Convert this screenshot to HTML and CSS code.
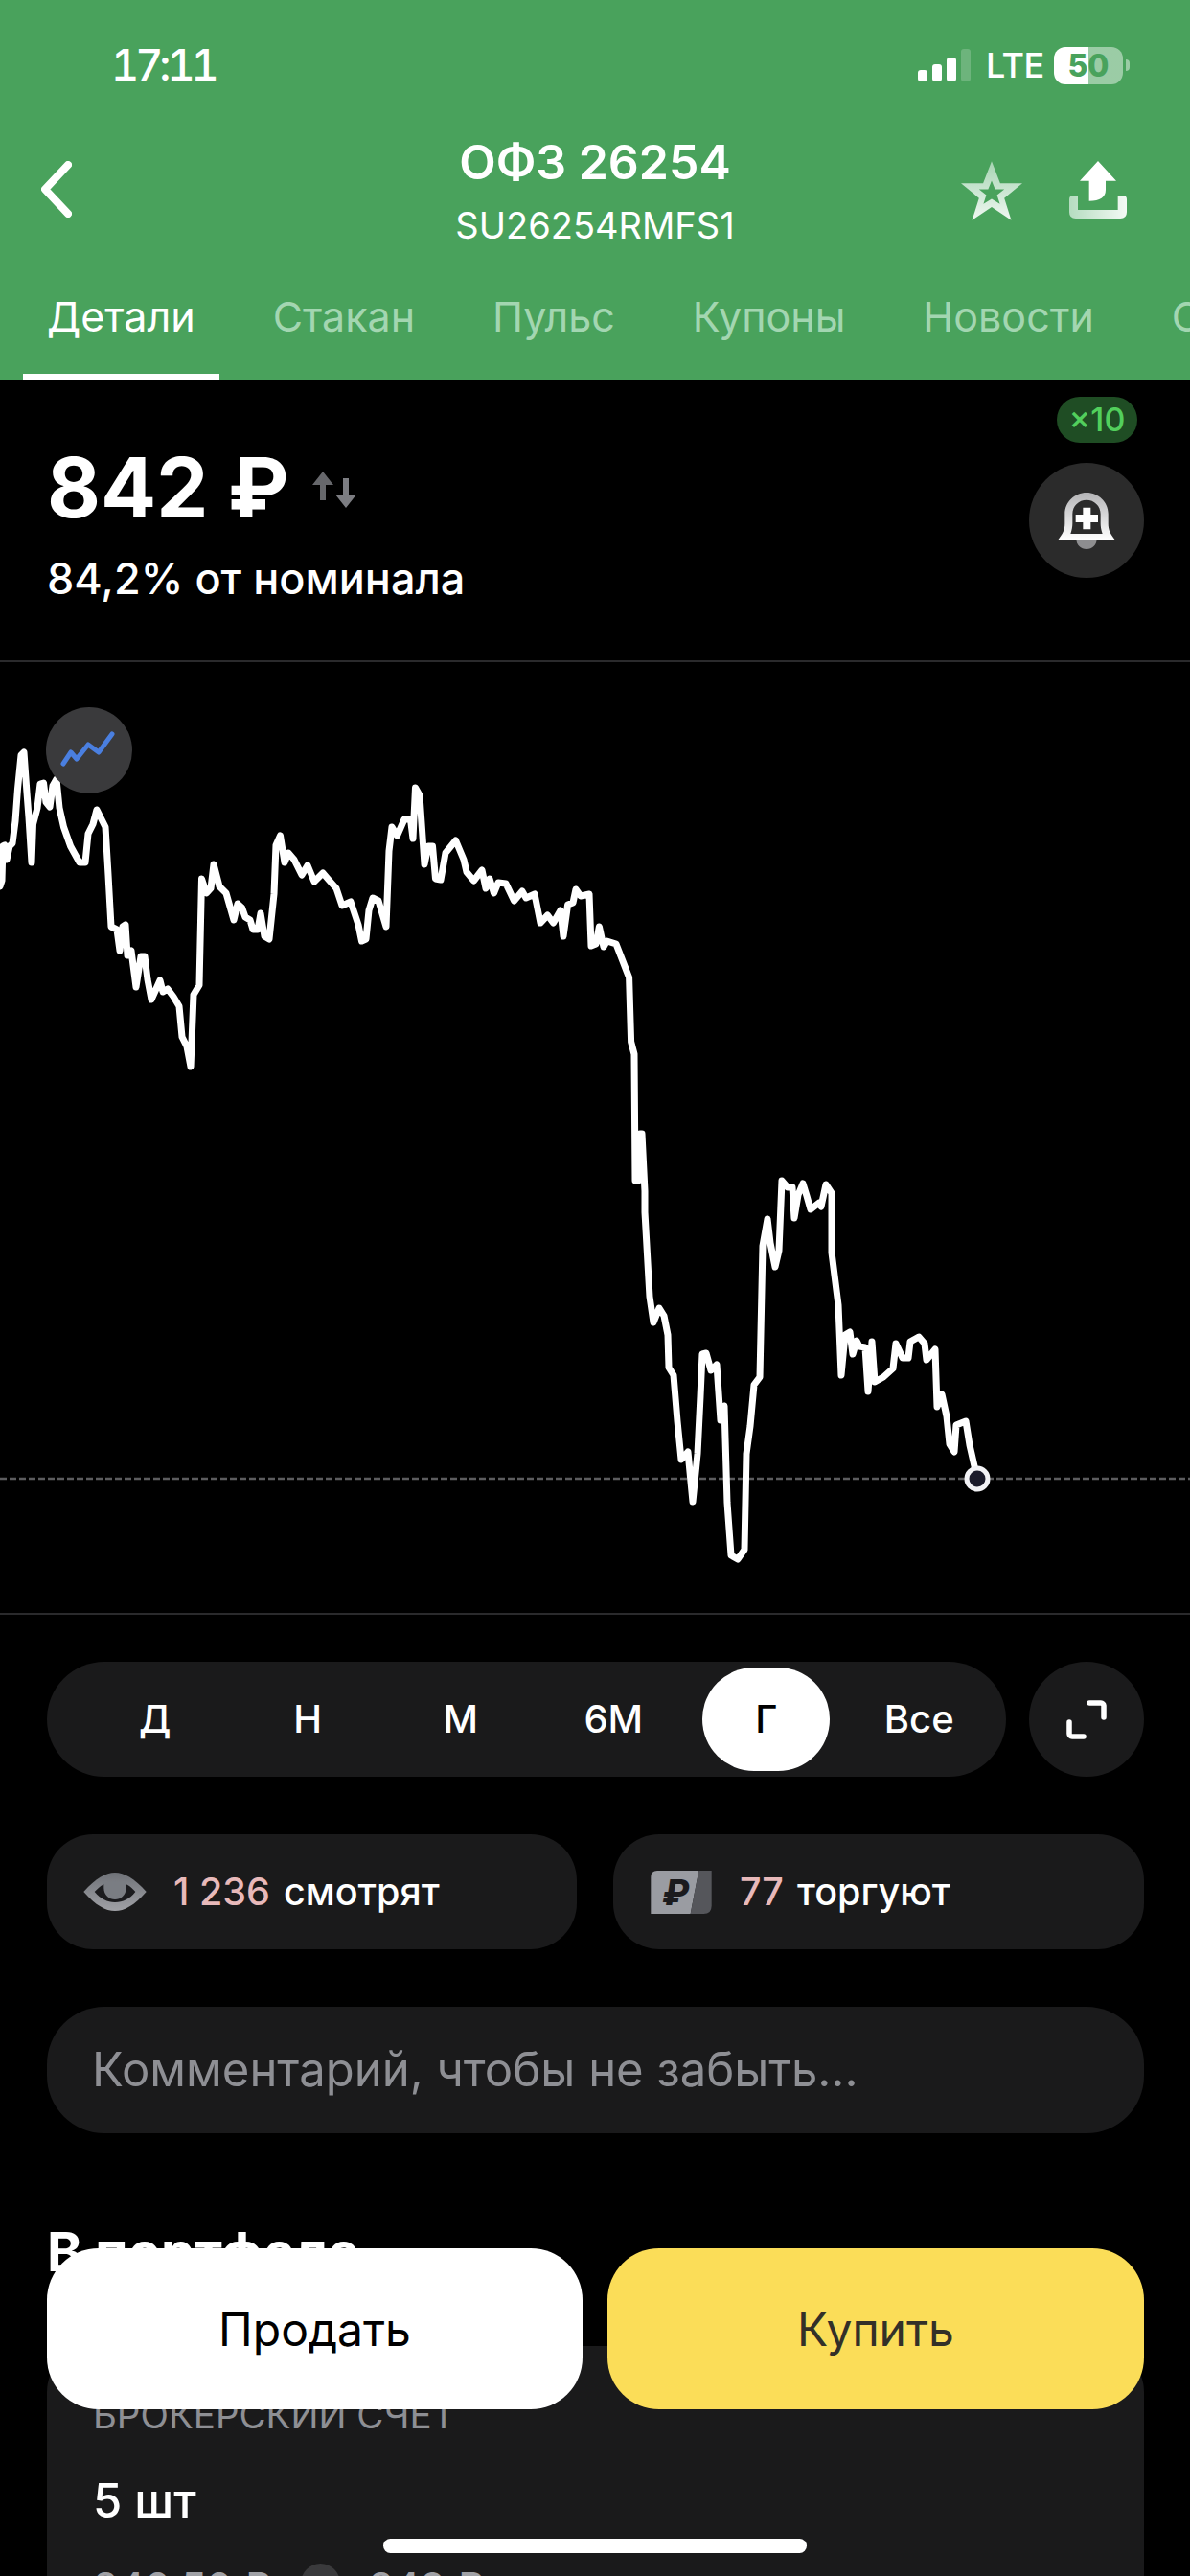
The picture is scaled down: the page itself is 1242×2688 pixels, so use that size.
FILE: index.html
```html
<!DOCTYPE html>
<html lang="ru">
<head>
<meta charset="utf-8">
<title>ОФЗ 26254</title>
<link rel="stylesheet" href="styles.css">
</head>
<body>
<div class="app">
  <header class="header">
    <div class="status">
      <span class="time">17:11</span>
      <div class="status-right">
        <div class="signal"><i class="b1"></i><i class="b2"></i><i class="b3"></i><i class="b4"></i></div>
        <span class="lte">LTE</span>
        <div class="battery"><span>50</span></div>
        <div class="battery-tip"></div>
      </div>
    </div>
    <div class="nav">
      <svg class="back" viewBox="0 0 32 59"><path d="M28 4L4 29.500L28 55" fill="none" stroke="#fff" stroke-width="8" stroke-linecap="round" stroke-linejoin="round"/></svg>
      <div class="titles">
        <div class="title">ОФЗ 26254</div>
        <div class="subtitle">SU26254RMFS1</div>
      </div>
      <div class="nav-actions">
        <svg class="star" viewBox="188 408 194 187">
          <defs><linearGradient id="sg" x1="0" y1="0" x2="0" y2="1"><stop offset="0" stop-color="#a6d4b2"/><stop offset="1" stop-color="#f0f8f2"/></linearGradient></defs>
          <path fill="url(#sg)" fill-rule="evenodd" d="M285 408L312 478H382L325 525L347 595L285 553L223 595L245 525L188 478H258ZM285 470L274 497H245L268 515L259 543L285 527L311 543L302 515L325 497H296Z"/>
        </svg>
        <svg class="share" viewBox="528 405 180 180">
          <defs><linearGradient id="tg" x1="0" y1="0" x2="1" y2="0"><stop offset="0" stop-color="#b5dcc0"/><stop offset="1" stop-color="#f4faf5"/></linearGradient></defs>
          <path fill="#fff" d="M618 405L675 467H642V495Q642 530 590 530V467H561Z"/>
          <path fill="url(#tg)" d="M540 513H555V558H680V513H696Q708 513 708 525V565Q708 585 688 585H548Q528 585 528 565V525Q528 513 540 513Z"/>
        </svg>
      </div>
    </div>
    <nav class="tabs">
      <span class="tab active">Детали</span>
      <span class="tab">Стакан</span>
      <span class="tab">Пульс</span>
      <span class="tab">Купоны</span>
      <span class="tab">Новости</span>
      <span class="tab">События</span>
    </nav>
  </header>

  <section class="price-block">
    <div class="price-text">
      <div class="price-line">
        <span class="price">842 ₽</span>
        <svg class="updown" viewBox="0 0 48 38">
          <path fill="#66676b" d="M12 0L23 14H15V30H9V14H1Z"/>
          <path fill="#7c7d82" d="M33 7H39V24H47L36 38L25 24H33Z"/>
        </svg>
      </div>
      <div class="nominal">84,2% от номинала</div>
    </div>
    <div class="alert-col">
      <span class="badge">×10</span>
      <div class="round-btn alert">
        <svg class="bell" viewBox="192 343 180 180">
          <defs><linearGradient id="bg" x1="0" y1="0" x2="0" y2="1"><stop offset="0" stop-color="#b4b4b6"/><stop offset="1" stop-color="#fff"/></linearGradient></defs>
          <path fill="#8e8e90" d="M250 488H314C314 508 300 520 282 520C264 520 250 508 250 488Z"/>
          <path fill="url(#bg)" fill-rule="evenodd" d="M192 492C208 472 214 460 214 440V410C214 372 245 343 282 343C319 343 350 372 350 410V440C350 460 356 472 372 492ZM232 472H332C328 462 326 450 326 440V410C326 385 306 366 282 366C258 366 238 385 238 410V440C238 450 236 462 232 472Z"/>
          <path fill="#fff" d="M271 390H295V412H318V436H295V458H271V436H248V412H271Z"/>
        </svg>
      </div>
    </div>
  </section>

  <section class="chart">
    <svg class="chart-svg" viewBox="0 691 1242 994">
      <line class="last-line" x1="0" y1="1543" x2="1242" y2="1543"/>
      <polyline class="line" points="0,925 2,919 3,883 5,882 7,897 10,883 13,880 16,857 18.500,823 22,788 25,785 28,827 30,853 33,900 34.500,860 39,843 42,818 45.500,817 48,837 52,842 55,820 59,813 62,843 66.500,863 73.600,883 83,900 89,900 92,870 97,860 101,845 105,853 110,863 113,913 116,967 122,970 125,992 128,967 131,965 133,997 137,992 142,1030 147,998 151,998 154,1022 158,1043 167,1023 170,1035 175,1032 181,1040 187,1050 190,1082 195,1092 199,1113 202,1038 208,1028 210.500,917 215.500,932 220,927 223,902 229,925 236,932 244,960 248,943 252.500,947 256,957 261,960 264,970 269,970 272,953 276,977 281,980 286,933 288,882 292.500,872 297,900 301,890 307,897 315,913 321,903 328,920 337,911 343,918 351,927 357,945 366,941 374,965 377.500,982 382,980 385,950 389,937 395,940 403,967 406,888 409,863 414.500,872 422,855 428.500,855 431,875 433.500,822 438,830 443,902 447,883 451.500,883 454.500,917 460,918 465,890 475.600,877 484,897 487,910 494.500,919 503,908 507,927 511,917 515.500,932 520,921 528,922 536.600,940 545,930 549,937 558,933 564,963 571.500,955 577.500,963 585,950 588,977 592.600,944 598,942 601,928 606,935 615,933 617,987 622,985 625.400,967 630,988 633.400,982 643,985 650,1003 656.600,1020 658.600,1087 662,1100 663,1232 666,1232 668,1183 670,1183 673,1243 673,1265 678,1353 682,1380 688,1365 693,1373 697,1393 698,1427 703,1435 707,1483 711,1523 718,1515 723,1567 728,1517 731,1457 733,1413 737,1412 742,1430 748,1424 752,1482 756,1467 759,1568 763,1623 770,1627 777,1617 779,1517 783,1488 787,1445 793,1437 796,1300 801,1272 804,1297 809,1322 813,1305 816,1232 822,1239 827,1239 829,1271 833,1247 838,1235 842,1248 846,1262 855,1255 857,1259 862,1236 868,1245 868,1307 875,1362 878,1435 882,1393 887,1390 890,1413 894,1399 897,1405 903,1406 906,1452 910,1400 913,1442 922,1437 932,1428 935,1402 942,1417 948,1417 950,1400 959,1395 965,1402 967,1419 976,1408 978,1468 983,1455 988,1478 991,1507 996,1515 998,1487 1008,1483 1012,1508 1020,1543"/>
      <circle class="last-dot" cx="1020" cy="1543" r="11"/>
    </svg>
    <div class="chart-type">
      <svg class="chart-icon" viewBox="0 0 90 90"><polyline points="18,59 26,47 32,54 44,39 55,47 69,28" fill="none" stroke="#4a7fe0" stroke-width="5" stroke-linecap="round" stroke-linejoin="round"/></svg>
    </div>
  </section>

  <section class="controls">
    <div class="range-row">
      <div class="range">
        <span class="range-item">Д</span>
        <span class="range-item">Н</span>
        <span class="range-item">М</span>
        <span class="range-item">6М</span>
        <span class="range-item selected">Г</span>
        <span class="range-item">Все</span>
      </div>
      <div class="round-btn expand">
        <svg class="expand-icon" viewBox="0 0 42 41"><path d="M24 3H36A3 3 0 0 1 39 6V18M3 23V35A3 3 0 0 0 6 38H18" fill="none" stroke="#fff" stroke-width="5.500" stroke-linecap="round" stroke-linejoin="round"/></svg>
      </div>
    </div>
    <div class="chips">
      <div class="chip chip-watch">
        <svg class="eye" viewBox="142 192 196 120">
          <defs><linearGradient id="eg" x1="0" y1="0" x2="0" y2="1"><stop offset="0" stop-color="#6f7278"/><stop offset="1" stop-color="#a0a1a6"/></linearGradient></defs>
          <path fill="url(#eg)" d="M142 252C180 210 210 192 240 192C270 192 300 210 338 252C300 295 270 312 240 312C210 312 180 295 142 252Z"/>
          <path fill="#1b1b1e" d="M176 252C196 232 205 224 240 222C275 224 286 232 304 252C286 275 265 285 240 285C215 285 196 275 176 252Z"/>
          <path fill="#7a7d83" d="M205 224Q240 214 275 224V240C275 262 258 276 240 276C222 276 205 262 205 240Z"/>
        </svg>
        <span class="count">1 236</span>
        <span>смотрят</span>
      </div>
      <div class="chip chip-trade">
        <svg class="card-icon" viewBox="88 185 190 135">
          <path fill="#9a9ca2" d="M108 185H238L212 320H88V205Q88 185 108 185Z"/>
          <path fill="#55565b" d="M238 185H278V295Q278 320 253 320H212Z"/>
          <text class="card-rub" x="124" y="293">₽</text>
        </svg>
        <span class="count">77</span>
        <span>торгуют</span>
      </div>
    </div>
    <div class="comment">Комментарий, чтобы не забыть...</div>
  </section>

  <section class="portfolio">
    <h2 class="portfolio-title">В портфеле</h2>
    <div class="portfolio-card">
      <div class="account">БРОКЕРСКИЙ СЧЕТ</div>
      <div class="qty">5 шт</div>
      <div class="avg-row">
        <span>840,50 ₽</span>
        <i class="avg-dot"></i>
        <span>842 ₽</span>
      </div>
    </div>
  </section>

  <div class="actions">
    <button class="action sell">Продать</button>
    <button class="action buy">Купить</button>
  </div>
  <div class="home-bar"></div>
</div>
</body>
</html>
```
FILE: styles.css
```css
* { box-sizing: border-box; }
html, body { margin: 0; padding: 0; background: #000; }
.app {
  position: relative;
  width: 1242px;
  height: 2688px;
  overflow: hidden;
  background: #000;
  color: #fff;
  font-family: Inter, "Noto Sans", sans-serif;
}
.header { height: 396px; background: #49a25c; }
.status {
  height: 128px;
  padding: 40px 63px 0 116px;
  display: flex;
  justify-content: space-between;
  align-items: flex-start;
}
.time { font-size: 45px; line-height: 56px; font-weight: 500; font-variant-numeric: tabular-nums; letter-spacing: -4px; }
.status-right { display: flex; align-items: center; height: 48px; margin-top: 4px; }
.signal { display: flex; align-items: flex-end; gap: 5px; height: 34px; margin-right: 16px; }
.signal i { display: block; width: 10px; background: #fff; border-radius: 3px; }
.signal .b1 { height: 12px; }
.signal .b2 { height: 18px; }
.signal .b3 { height: 25px; }
.signal .b4 { height: 34px; background: rgba(255, 255, 255, .2); }
.lte { font-size: 36px; font-weight: 500; letter-spacing: -.5px; width: 71px; }
.battery {
  width: 72px;
  height: 39px;
  border-radius: 12px;
  background: linear-gradient(90deg, #fff 50%, rgba(255, 255, 255, .45) 50%);
  color: #49a25c;
  font-size: 32px;
  line-height: 39px;
  font-weight: 800;
  text-align: center;
}
.battery-tip { width: 4px; height: 12px; margin-left: 3px; background: rgba(255, 255, 255, .45); border-radius: 0 6px 6px 0; }
.nav {
  height: 120px;
  padding: 12px 43px 0;
  display: grid;
  grid-template-columns: 1fr auto 1fr;
  align-items: center;
}
.back { width: 32px; height: 59px; margin-top: -3px; }
.titles { text-align: center; margin-top: -1px; }
.title { font-size: 50px; line-height: 60px; font-weight: 600; }
.subtitle { font-size: 38px; line-height: 44px; margin-top: 14px; }
.nav-actions { display: flex; justify-content: flex-end; gap: 49px; padding-right: 23px; }
.star { width: 64px; height: 62px; }
.share { width: 60px; height: 60px; }
.tabs { display: flex; gap: 31px; margin-left: 24px; height: 148px; white-space: nowrap; }
.tab {
  height: 148px;
  padding: 56px 25px 0;
  font-size: 43px;
  line-height: 52px;
  color: #a3d6b1;
  border-bottom: 6px solid transparent;
}
.tab.active { color: #fff; border-bottom-color: #fff; }

.price-block {
  height: 295px;
  border-bottom: 2px solid #2a2a2c;
  padding: 18px 48px 0 49px;
  display: flex;
  justify-content: space-between;
}
.price-text { padding-top: 43px; }
.price-line { display: flex; align-items: center; height: 104px; }
.price { font-size: 86px; line-height: 104px; font-weight: 700; }
.updown { width: 48px; height: 38px; margin-left: 24px; margin-top: 4px; }
.nominal { font-size: 45px; line-height: 52px; font-weight: 500; margin-top: 17px; }
.alert-col { display: flex; flex-direction: column; align-items: flex-end; gap: 21px; }
.badge {
  width: 84px;
  height: 48px;
  border-radius: 24px;
  background: #1f4d24;
  color: #52cf5c;
  font-size: 34px;
  line-height: 48px;
  font-weight: 500;
  text-align: center;
  margin-right: 7px;
}
.round-btn { width: 120px; height: 120px; border-radius: 50%; display: flex; align-items: center; justify-content: center; }
.alert { background: #2b2b2b; }
.bell { width: 60px; height: 60px; margin-top: 1px; }

.chart { position: relative; height: 994px; border-bottom: 2px solid #2a2a2c; }
.chart-svg { display: block; width: 1242px; height: 994px; }
.line { fill: none; stroke: #fff; stroke-width: 7; stroke-linejoin: round; stroke-linecap: round; }
.last-line { stroke: #5c5c5e; stroke-width: 2.500; stroke-dasharray: 7 3; }
.last-dot { fill: #1b1b2a; stroke: #f2f2f5; stroke-width: 5; }
.chart-type {
  position: absolute;
  left: 48px;
  top: 47px;
  width: 90px;
  height: 90px;
  border-radius: 50%;
  background: #3a3a3c;
}
.chart-icon { display: block; width: 90px; height: 90px; }

.controls { padding: 49px 48px 0 49px; }
.range-row { display: flex; justify-content: space-between; }
.range {
  width: 1001px;
  height: 120px;
  padding: 0 10px 0 33px;
  border-radius: 60px;
  background: #1a1a1b;
  display: grid;
  grid-template-columns: repeat(6, 159.500px);
  align-items: center;
}
.range-item {
  justify-self: center;
  width: 133px;
  height: 108px;
  border-radius: 54px;
  font-size: 40px;
  line-height: 108px;
  font-weight: 500;
  text-align: center;
}
.selected { background: #fff; color: #000; }
.expand { background: #1a1a1b; }
.expand-icon { width: 42px; height: 41px; }
.chips { display: grid; grid-template-columns: 553px 554px; column-gap: 38px; margin-top: 60px; }
.chip {
  height: 120px;
  border-radius: 48px;
  background: #1a1a1b;
  display: flex;
  align-items: center;
  font-size: 39.500px;
  font-weight: 500;
}
.chip span + span { margin-left: 14px; }
.count { color: #e8b9ba; }
.chip-watch { padding-left: 38px; }
.eye { width: 66px; height: 40px; margin-right: 28px; }
.chip-trade { padding-left: 39px; }
.card-icon { width: 64px; height: 45px; margin-right: 29px; }
.card-rub { font-size: 110px; font-weight: 800; fill: #1b1b1e; font-style: italic; font-family: Inter, sans-serif; }
.comment {
  margin-top: 60px;
  height: 132px;
  padding-left: 47px;
  border-radius: 60px;
  background: #1a1a1b;
  color: #8e8f94;
  font-size: 49px;
  line-height: 132px;
}

.portfolio { padding: 90px 48px 0 49px; }
.portfolio-title { margin: 0; font-size: 56px; line-height: 68px; font-weight: 700; }
.portfolio-card { margin-top: 64px; height: 400px; padding: 50px 48px 0; border-radius: 48px 48px 0 0; background: #1a1a1b; }
.account { font-size: 38.500px; line-height: 44px; color: #8e8f94; }
.qty { margin-top: 39px; font-size: 49px; line-height: 58px; font-weight: 500; }
.avg-row { display: flex; align-items: flex-start; gap: 30px; margin-top: 36px; font-size: 42px; line-height: 50px; font-weight: 500; color: #a0a1a6; }
.avg-dot { display: block; width: 41px; height: 41px; border-radius: 50%; background: #3a3a3c; }

.actions {
  position: absolute;
  left: 49px;
  top: 2346px;
  width: 1145px;
  display: grid;
  grid-template-columns: 559px 560px;
  column-gap: 26px;
}
.action {
  height: 168px;
  border: 0;
  border-radius: 54px;
  font-family: inherit;
  font-size: 48px;
  color: #000;
}
.sell { background: #fff; }
.buy { background: #fbdd58; color: #333028; }
.home-bar { position: absolute; left: 400px; top: 2649px; width: 442px; height: 15px; border-radius: 8px; background: #fff; }
```
